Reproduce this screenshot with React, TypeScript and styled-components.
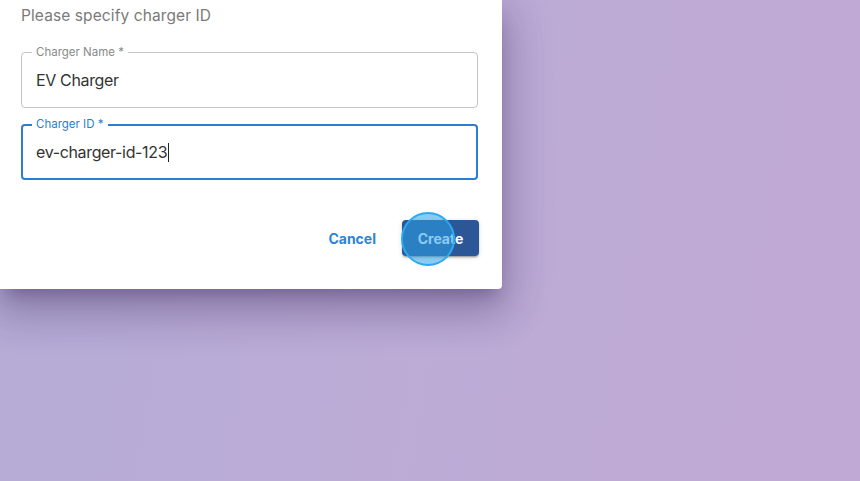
import React from "react";
import styled, { createGlobalStyle } from "styled-components";

const Global = createGlobalStyle`
  html, body { margin: 0; padding: 0; }
  body {
    width: 860px;
    height: 481px;
    overflow: hidden;
    font-family: "Inter", "Liberation Sans", sans-serif;
    background: linear-gradient(100deg, #b5acd6 0%, #bbacd6 45%, #c1a9d5 100%);
  }
`;

const Page = styled.div`
  width: 860px;
  height: 481px;
  display: flex;
  align-items: flex-start;
`;

const Dialog = styled.div`
  width: 502px;
  box-sizing: border-box;
  background: #fff;
  border-radius: 0 0 4px 0;
  padding: 4px 23px 33px 21px;
  box-shadow: 0 11px 15px -7px rgba(60, 40, 90, 0.35),
    0 24px 38px 3px rgba(60, 40, 90, 0.22), 0 9px 46px 8px rgba(60, 40, 90, 0.18);
  display: flex;
  flex-direction: column;
`;

const Hint = styled.p`
  margin: 0;
  font-size: 15.5px;
  line-height: 24px;
  color: #7a7a7a;
  letter-spacing: 0.1px;
`;

const FieldBox = styled.div<{ $focused?: boolean; $gap: number }>`
  position: relative;
  margin: ${(p) => p.$gap}px 1px 0 0;
  height: 56px;
  box-sizing: border-box;
  padding: 0 ${(p) => (p.$focused ? "13px" : "14px")};
  border: ${(p) => (p.$focused ? "2px solid #2a7fd2" : "1px solid #c4c4c4")};
  border-radius: 4px;
  display: flex;
  align-items: center;
`;

const Label = styled.span<{ $focused?: boolean }>`
  position: absolute;
  top: ${(p) => (p.$focused ? "-8px" : "-7px")};
  left: ${(p) => (p.$focused ? "9px" : "10px")};
  padding: 0 4px;
  background: #fff;
  font-size: 11.5px;
  line-height: 13px;
  color: ${(p) => (p.$focused ? "#2a7fd2" : "#8a8a8a")};
`;

const Value = styled.span`
  font-size: 16px;
  letter-spacing: -0.35px;
  color: #333;
  display: flex;
  align-items: center;
`;

const Caret = styled.span`
  display: inline-block;
  width: 1px;
  height: 19px;
  background: #222;
  margin-left: 1px;
`;

const Actions = styled.div`
  margin-top: 40px;
  display: flex;
  justify-content: flex-end;
  align-items: center;
  gap: 18px;
`;

const TextButton = styled.button`
  border: none;
  background: transparent;
  font-family: inherit;
  font-weight: 700;
  font-size: 14px;
  color: #2d84d4;
  padding: 8px 8px;
  cursor: pointer;
`;

const PrimaryButton = styled.button`
  position: relative;
  border: none;
  border-radius: 4px;
  background: #2b5797;
  color: #fff;
  font-family: inherit;
  font-weight: 700;
  font-size: 14px;
  width: 77px;
  height: 36px;
  box-shadow: 0 3px 1px -2px rgba(0, 0, 0, 0.2), 0 2px 2px 0 rgba(0, 0, 0, 0.14),
    0 1px 5px 0 rgba(0, 0, 0, 0.12);
  cursor: pointer;
`;

const ClickMarker = styled.span`
  position: absolute;
  left: -1px;
  top: -8px;
  width: 54px;
  height: 54px;
  border-radius: 50%;
  border: 2px solid #2aaaf0;
  background: rgba(44, 160, 232, 0.55);
  box-sizing: border-box;
  pointer-events: none;
`;

export default function App() {
  return (
    <>
      <Global />
      <Page>
        <Dialog>
          <Hint>Please specify charger ID</Hint>
          <FieldBox $gap={24}>
            <Label>Charger Name *</Label>
            <Value>EV Charger</Value>
          </FieldBox>
          <FieldBox $focused $gap={16}>
            <Label $focused>Charger ID *</Label>
            <Value>
              ev-charger-id-123
              <Caret />
            </Value>
          </FieldBox>
          <Actions>
            <TextButton>Cancel</TextButton>
            <PrimaryButton>
              Create
              <ClickMarker />
            </PrimaryButton>
          </Actions>
        </Dialog>
      </Page>
    </>
  );
}
